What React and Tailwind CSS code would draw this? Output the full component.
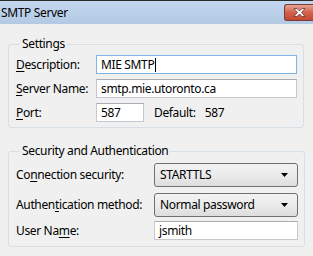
import React from "react";

const font = { fontFamily: '"Noto Sans", "Open Sans", sans-serif' };

function U({ children }) {
  return <span className="underline underline-offset-2">{children}</span>;
}

function Input({ value, focused, className = "" }) {
  return (
    <div
      className={`h-[19px] bg-white border flex items-center pl-[4px] text-[12px] leading-none ${
        focused ? "border-[#7eb4ea]" : "border-[#c5c9ce] border-t-[#abadb3]"
      } ${className}`}
    >
      <span>{value}</span>
      {focused && <span className="w-[1px] h-[14px] bg-black ml-[1px]" />}
    </div>
  );
}

function Select({ value }) {
  return (
    <div className="h-[24px] w-[144px] rounded-[3px] border border-[#707070] bg-gradient-to-b from-[#f2f2f2] via-[#ebebeb] to-[#dddddd] flex items-center justify-between pl-[5px] pr-[9px] text-[12px]">
      <span>{value}</span>
      <svg width="7" height="4" viewBox="0 0 7 4">
        <path d="M0 0 H7 L3.5 4 Z" fill="#000" />
      </svg>
    </div>
  );
}

export default function App() {
  return (
    <div
      className="w-[313px] h-[256px] bg-[#f0f0f0] flex flex-col text-black overflow-hidden tracking-[-0.35px]"
      style={font}
    >
      {/* Title bar */}
      <div className="h-[24px] border-t border-t-[#2b2b2b] bg-gradient-to-b from-[#c2d7ee] to-[#b3cae4] flex items-center justify-between pl-[1px]">
        <span className="text-[12px]">SMTP Server</span>
        <div className="w-[29px] h-[17px] rounded-l-[3px] border border-[#7a3a3a] border-r-0 bg-gradient-to-b from-[#e6a595] via-[#d0614a] to-[#c34a33] flex items-center justify-center">
          <svg width="13" height="9" viewBox="0 0 13 9">
            <path
              d="M1 0.5 H4 L6.5 3 L9 0.5 H12 L8.5 4.5 L12 8.5 H9 L6.5 6 L4 8.5 H1 L4.5 4.5 Z"
              fill="#fff"
              stroke="#6b3030"
              strokeWidth="0.8"
            />
          </svg>
        </div>
      </div>

      <div className="pl-[8px] pr-[9px] pt-[12px]">
        {/* Settings group */}
        <fieldset className="border border-[#d5dfe5] rounded-[3px] pl-[7px] pr-[6px] pt-[3px] pb-[5px]">
          <legend className="ml-[4px] px-[2px] text-[12px] leading-[16px]">
            Settings
          </legend>
          <div className="grid grid-cols-[80px_1fr] gap-y-[5px] items-center text-[12px]">
            <span>
              <U>D</U>escription:
            </span>
            <Input value="MIE SMTP" focused />
            <span>
              <U>S</U>erver Name:
            </span>
            <Input value="smtp.mie.utoronto.ca" />
            <span>
              <U>P</U>ort:
            </span>
            <div className="flex items-center">
              <Input value="587" className="w-[48px]" />
              <span className="ml-[10px]">Default:</span>
              <span className="ml-[9px]">587</span>
            </div>
          </div>
        </fieldset>

        {/* Security group */}
        <fieldset className="mt-[15px] border border-[#d5dfe5] rounded-[3px] pl-[7px] pr-[6px] pt-[4px] pb-[6px]">
          <legend className="ml-[4px] px-[2px] text-[12px] leading-[16px]">
            Security and Authentication
          </legend>
          <div className="grid grid-cols-[138px_1fr] items-center text-[12px]">
            <span>
              Co<U>n</U>nection security:
            </span>
            <Select value="STARTTLS" />
            <span className="mt-[6px]">
              Authen<U>t</U>ication method:
            </span>
            <div className="mt-[6px]">
              <Select value="Normal password" />
            </div>
            <span className="mt-[4px]">
              User Na<U>m</U>e:
            </span>
            <Input value="jsmith" className="mt-[4px] w-[144px]" />
          </div>
        </fieldset>
      </div>
    </div>
  );
}
